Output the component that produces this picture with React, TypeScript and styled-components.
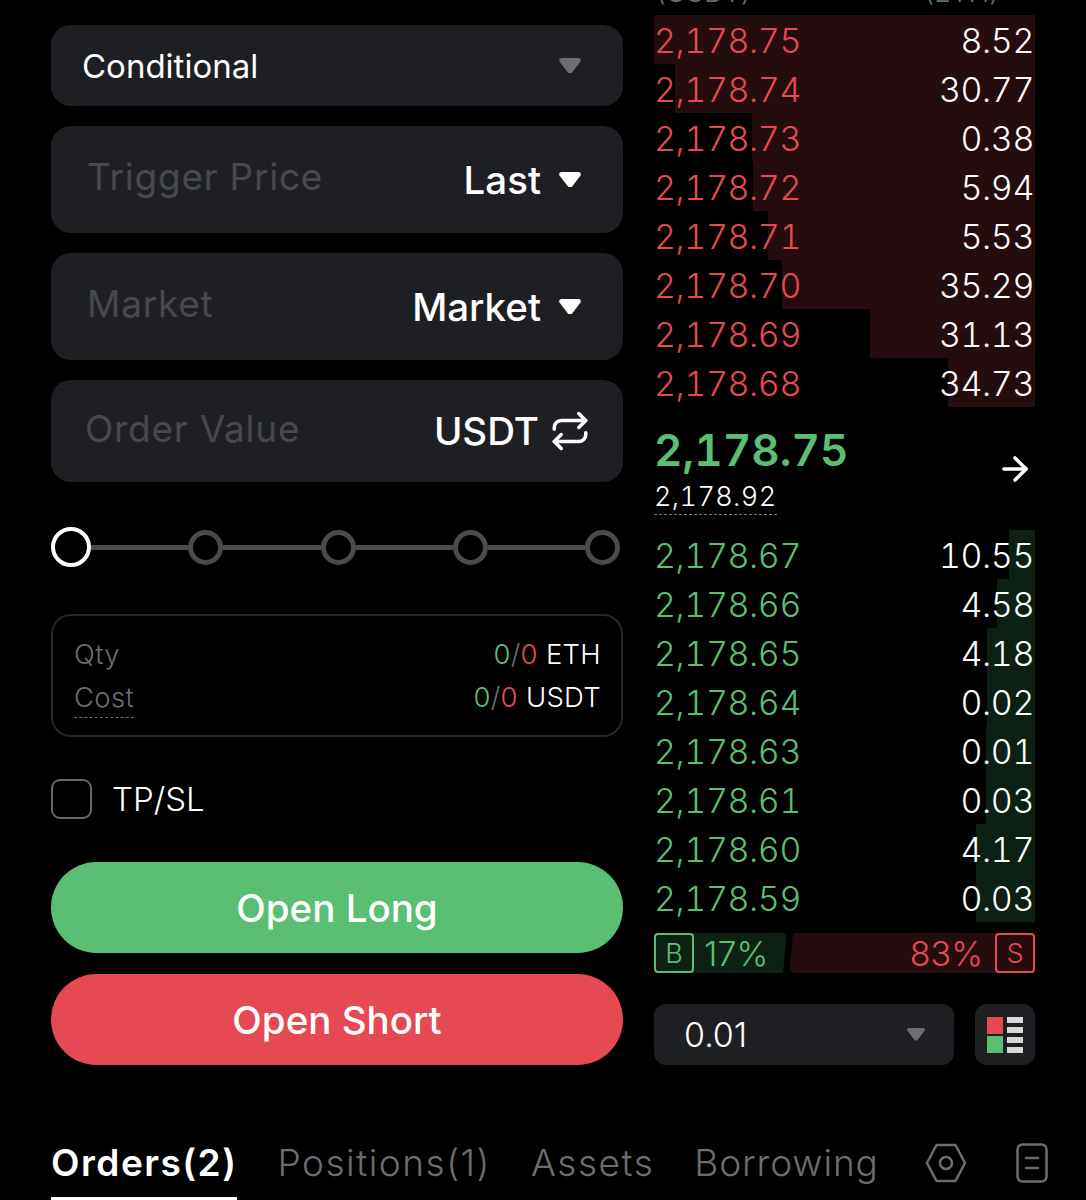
import React from 'react';
import styled, { createGlobalStyle } from 'styled-components';
import { ArrowRight, Repeat } from 'lucide-react';

const Colors = {
  bg: '#000000',
  field: '#1e1f23',
  green: '#5bbf73',
  red: '#e54a52',
  darkGreen: '#0c2114',
  darkRed: '#240c0f',
  grey: '#6c6d72',
  placeholder: '#47484d',
  white: '#ffffff',
};

const GlobalStyle = createGlobalStyle`
  html, body { margin: 0; padding: 0; background: ${Colors.bg}; }
  * { box-sizing: border-box; }
`;

const Page = styled.div`
  width: 1086px;
  height: 1200px;
  overflow: hidden;
  background: ${Colors.bg};
  color: ${Colors.white};
  font-family: Inter, "Liberation Sans", sans-serif;
  padding-left: 51px;
`;

const Columns = styled.div`
  display: grid;
  grid-template-columns: 572px 381px;
  column-gap: 31px;
  height: 1065px;
`;

const LeftColumn = styled.div`
  display: flex;
  flex-direction: column;
  padding-top: 25px;
`;

const Field = styled.div<{ $height: number; $gap?: number; $pad?: number }>`
  display: flex;
  align-items: center;
  justify-content: space-between;
  height: ${(p) => p.$height}px;
  margin-bottom: ${(p) => p.$gap ?? 20}px;
  padding: 0 ${(p) => p.$pad ?? 42}px 0 36px;
  background: ${Colors.field};
  border-radius: 20px;
`;

const SelectLabel = styled.span`
  font-size: 33px;
  margin-left: -5px;
`;

const Placeholder = styled.span<{ $shift?: number }>`
  font-size: 37px;
  color: ${Colors.placeholder};
  letter-spacing: 0.75px;
  margin-left: ${(p) => p.$shift ?? 0}px;
  margin-top: -6px;
`;

const FieldValue = styled.span`
  display: flex;
  align-items: center;
  gap: 18px;
  font-size: 38.5px;
  font-weight: 500;
`;

const Slider = styled.div`
  display: flex;
  align-items: center;
  height: 40px;
  margin-top: 45px;
  padding-right: 3px;
`;

const Thumb = styled.span<{ $active?: boolean }>`
  flex: none;
  width: ${(p) => (p.$active ? 40 : 35)}px;
  height: ${(p) => (p.$active ? 40 : 35)}px;
  border-radius: 50%;
  border: ${(p) => (p.$active ? `4.5px solid ${Colors.white}` : '5px solid #4a4b4f')};
`;

const Track = styled.span`
  flex: 1;
  height: 5px;
  background: #4a4b4f;
`;

const InfoBox = styled.div`
  display: flex;
  flex-direction: column;
  gap: 9px;
  height: 123px;
  margin-top: 47px;
  padding: 21px 20px 0 21px;
  border: 2px solid #26272b;
  border-radius: 20px;
`;

const InfoRow = styled.div`
  display: flex;
  justify-content: space-between;
  font-size: 27.5px;
  line-height: 34px;
  font-weight: 300;
  letter-spacing: 0.3px;
`;

const InfoLabel = styled.span<{ $dotted?: boolean }>`
  color: ${Colors.grey};
  ${(p) => p.$dotted && 'border-bottom: 1px dashed #6c6d72; height: 38px;'}
`;

const Tint = styled.span<{ $color: string }>`
  color: ${(p) => p.$color};
`;

const CheckRow = styled.div`
  display: flex;
  align-items: center;
  gap: 20px;
  margin-top: 42px;
  font-size: 33px;
  font-weight: 300;
  height: 40px;
`;

const CheckBox = styled.span`
  width: 41px;
  height: 40px;
  border: 2.5px solid #66676b;
  border-radius: 9px;
`;

const ActionButton = styled.div<{ $color: string; $top: number }>`
  display: flex;
  align-items: center;
  justify-content: center;
  height: 91px;
  margin-top: ${(p) => p.$top}px;
  border-radius: 46px;
  background: ${(p) => p.$color};
  font-size: 38.5px;
  font-weight: 500;
`;

const RightColumn = styled.div`
  display: flex;
  flex-direction: column;
`;

const BookHeader = styled.div`
  display: flex;
  justify-content: space-between;
  align-items: flex-end;
  height: 15px;
  padding: 0 36px 8px 2px;
  font-size: 28px;
  line-height: 30px;
  font-weight: 300;
  color: ${Colors.grey};
`;

const BookRow = styled.div`
  position: relative;
  display: flex;
  justify-content: space-between;
  align-items: center;
  height: 49px;
  padding: 1px 1px 0 0;
  font-size: 34px;
  font-weight: 300;
  letter-spacing: -0.4px;
  font-variant-numeric: tabular-nums;
`;

const DepthBar = styled.span<{ $color: string }>`
  position: absolute;
  top: 0;
  right: 0;
  bottom: 0;
  background: ${(p) => p.$color};
`;

const RowText = styled.span<{ $color?: string }>`
  position: relative;
  color: ${(p) => p.$color ?? Colors.white};
`;

const MidPrice = styled.div`
  display: flex;
  justify-content: space-between;
  height: 123px;
  padding: 20px 1px 0 0;
`;

const MidStack = styled.div`
  display: flex;
  flex-direction: column;
  align-items: flex-start;
`;

const LastPrice = styled.span`
  font-size: 44px;
  line-height: 46px;
  font-weight: 600;
  color: ${Colors.green};
  font-variant-numeric: tabular-nums;
`;

const MarkPrice = styled.span`
  margin-top: 9px;
  font-size: 27px;
  line-height: 30px;
  font-weight: 300;
  letter-spacing: 0.4px;
  padding-bottom: 2px;
  border-bottom: 1px dashed #77787c;
  font-variant-numeric: tabular-nums;
`;

const MidArrow = styled.span`
  display: flex;
  align-items: center;
  height: 84px;
`;

const RatioBar = styled.div`
  display: flex;
  align-items: stretch;
  height: 40px;
  margin-top: 11px;
  font-size: 34px;
  font-weight: 300;
`;

const RatioSide = styled.div<{ $bg: string; $color: string; $sell?: boolean }>`
  display: flex;
  align-items: center;
  justify-content: ${(p) => (p.$sell ? 'flex-end' : 'flex-start')};
  gap: ${(p) => (p.$sell ? 12 : 10)}px;
  flex: ${(p) => (p.$sell ? '1' : 'none')};
  width: ${(p) => (p.$sell ? 'auto' : '133px')};
  margin-left: ${(p) => (p.$sell ? '2px' : '0')};
  background: ${(p) => p.$bg};
  color: ${(p) => p.$color};
  border-radius: 5px;
  clip-path: ${(p) =>
    p.$sell ? 'polygon(4px 0, 100% 0, 100% 100%, 0 100%)' : 'polygon(0 0, 100% 0, calc(100% - 4px) 100%, 0 100%)'};
`;

const SideTag = styled.span<{ $color: string }>`
  display: flex;
  align-items: center;
  justify-content: center;
  flex: none;
  width: 40px;
  height: 40px;
  border: 2px solid ${(p) => p.$color};
  border-radius: 4px;
  font-size: 27px;
`;

const BookFooter = styled.div`
  display: flex;
  justify-content: space-between;
  margin-top: 31px;
`;

const StepSelect = styled.div`
  display: flex;
  align-items: center;
  justify-content: space-between;
  width: 300px;
  height: 61px;
  padding: 0 29px 0 30px;
  background: ${Colors.field};
  border-radius: 12px;
  font-size: 34px;
  font-weight: 300;
`;

const ViewButton = styled.div`
  display: flex;
  align-items: center;
  justify-content: center;
  width: 60px;
  height: 61px;
  background: ${Colors.field};
  border-radius: 12px;
`;

const TabBar = styled.div`
  display: flex;
  align-items: flex-start;
  height: 135px;
  padding-top: 74px;
`;

const TabScroller = styled.div`
  display: flex;
  gap: 40px;
  width: 830px;
  overflow: hidden;
  flex: none;
`;

const Tab = styled.div<{ $active?: boolean; $spacing?: number }>`
  position: relative;
  flex: none;
  height: 61px;
  font-size: 37px;
  line-height: 48px;
  letter-spacing: ${(p) => p.$spacing ?? 1.5}px;
  font-weight: ${(p) => (p.$active ? 600 : 300)};
  color: ${(p) => (p.$active ? Colors.white : Colors.grey)};
  border-bottom: ${(p) => (p.$active ? `3px solid ${Colors.white}` : 'none')};
`;

const TabIcons = styled.div`
  display: flex;
  align-items: center;
  gap: 49px;
  height: 48px;
  margin-left: 44px;
`;

const Caret = ({ color, size = 22 }: { color: string; size?: number }) => (
  <svg width={size} height={size * 0.72} viewBox="0 0 22 16" fill={color}>
    <path d="M2.4 0h17.2c1.9 0 3 2 2 3.5l-8.6 11.3c-1 1.3-2.9 1.3-3.9 0L.4 3.5C-.6 2 .5 0 2.4 0z" />
  </svg>
);

const BookViewIcon = () => (
  <svg width="36" height="36" viewBox="0 0 36 36">
    <rect x="0" y="0" width="16" height="17" fill={Colors.red} />
    <rect x="0" y="19" width="16" height="17" fill={Colors.green} />
    <rect x="20" y="0" width="16" height="6" fill="#d8d8d8" />
    <rect x="20" y="10" width="16" height="6" fill="#d8d8d8" />
    <rect x="20" y="20" width="16" height="6" fill="#d8d8d8" />
    <rect x="20" y="30" width="16" height="6" fill="#d8d8d8" />
  </svg>
);

const HexIcon = () => (
  <svg width="42" height="40" viewBox="0 0 42 40" fill="none" stroke={Colors.grey} strokeWidth="2.5" strokeLinejoin="round">
    <path d="M11.5 2h19L40 20l-9.5 18h-19L2 20z" />
    <circle cx="21" cy="20" r="6" />
  </svg>
);

const NoteIcon = () => (
  <svg width="32" height="40" viewBox="0 0 32 40" fill="none" stroke={Colors.grey} strokeWidth="2.5" strokeLinecap="round">
    <rect x="1.5" y="1.5" width="29" height="37" rx="5" />
    <path d="M10 15h12M10 25h12" />
  </svg>
);

const asks = [
  ['2,178.75', '8.52', 381],
  ['2,178.74', '30.77', 360],
  ['2,178.73', '0.38', 283],
  ['2,178.72', '5.94', 282],
  ['2,178.71', '5.53', 267],
  ['2,178.70', '35.29', 253],
  ['2,178.69', '31.13', 165],
  ['2,178.68', '34.73', 87],
] as const;

const bids = [
  ['2,178.67', '10.55', 26],
  ['2,178.66', '4.58', 38],
  ['2,178.65', '4.18', 48],
  ['2,178.64', '0.02', 48],
  ['2,178.63', '0.01', 49],
  ['2,178.61', '0.03', 49],
  ['2,178.60', '4.17', 59],
  ['2,178.59', '0.03', 59],
] as const;

const BookRows = (props: { rows: ReadonlyArray<readonly [string, string, number]>; color: string; bar: string }) => (
  <>
    {props.rows.map(([price, amount, depth]) => (
      <BookRow key={price}>
        <DepthBar $color={props.bar} style={{ width: depth }} />
        <RowText $color={props.color}>{price}</RowText>
        <RowText>{amount}</RowText>
      </BookRow>
    ))}
  </>
);

const App = () => {
  return (
    <Page>
      <GlobalStyle />
      <Columns>
        <LeftColumn>
          <Field $height={81}>
            <SelectLabel>Conditional</SelectLabel>
            <Caret color={Colors.grey} />
          </Field>
          <Field $height={107}>
            <Placeholder>Trigger Price</Placeholder>
            <FieldValue>
              Last
              <Caret color={Colors.white} />
            </FieldValue>
          </Field>
          <Field $height={107}>
            <Placeholder>Market</Placeholder>
            <FieldValue>
              Market
              <Caret color={Colors.white} />
            </FieldValue>
          </Field>
          <Field $height={102} $gap={0} $pad={32}>
            <Placeholder $shift={-2}>Order Value</Placeholder>
            <FieldValue>
              USDT
              <Repeat size={42} strokeWidth={2} style={{ marginLeft: -8 }} />
            </FieldValue>
          </Field>
          <Slider>
            <Thumb $active />
            <Track />
            <Thumb />
            <Track />
            <Thumb />
            <Track />
            <Thumb />
            <Track />
            <Thumb />
          </Slider>
          <InfoBox>
            <InfoRow>
              <InfoLabel>Qty</InfoLabel>
              <span>
                <Tint $color={Colors.green}>0</Tint>
                <Tint $color={Colors.grey}>/</Tint>
                <Tint $color={Colors.red}>0</Tint> ETH
              </span>
            </InfoRow>
            <InfoRow>
              <InfoLabel $dotted>Cost</InfoLabel>
              <span>
                <Tint $color={Colors.green}>0</Tint>
                <Tint $color={Colors.grey}>/</Tint>
                <Tint $color={Colors.red}>0</Tint> USDT
              </span>
            </InfoRow>
          </InfoBox>
          <CheckRow>
            <CheckBox />
            TP/SL
          </CheckRow>
          <ActionButton $color={Colors.green} $top={43}>
            Open Long
          </ActionButton>
          <ActionButton $color={Colors.red} $top={21}>
            Open Short
          </ActionButton>
        </LeftColumn>
        <RightColumn>
          <BookHeader>
            <span>(USDT)</span>
            <span>(ETH)</span>
          </BookHeader>
          <BookRows rows={asks} color={Colors.red} bar={Colors.darkRed} />
          <MidPrice>
            <MidStack>
              <LastPrice>2,178.75</LastPrice>
              <MarkPrice>2,178.92</MarkPrice>
            </MidStack>
            <MidArrow>
              <ArrowRight size={38} strokeWidth={2.2} />
            </MidArrow>
          </MidPrice>
          <BookRows rows={bids} color={Colors.green} bar={Colors.darkGreen} />
          <RatioBar>
            <RatioSide $bg={Colors.darkGreen} $color={Colors.green}>
              <SideTag $color={Colors.green}>B</SideTag>
              17%
            </RatioSide>
            <RatioSide $bg={Colors.darkRed} $color={Colors.red} $sell>
              83%
              <SideTag $color={Colors.red}>S</SideTag>
            </RatioSide>
          </RatioBar>
          <BookFooter>
            <StepSelect>
              0.01
              <Caret color={Colors.grey} size={18} />
            </StepSelect>
            <ViewButton>
              <BookViewIcon />
            </ViewButton>
          </BookFooter>
        </RightColumn>
      </Columns>
      <TabBar>
        <TabScroller>
          <Tab $active>Orders(2)</Tab>
          <Tab>Positions(1)</Tab>
          <Tab>Assets</Tab>
          <Tab $spacing={0.9}>Borrowings</Tab>
        </TabScroller>
        <TabIcons>
          <HexIcon />
          <NoteIcon />
        </TabIcons>
      </TabBar>
    </Page>
  );
};

export default App;
